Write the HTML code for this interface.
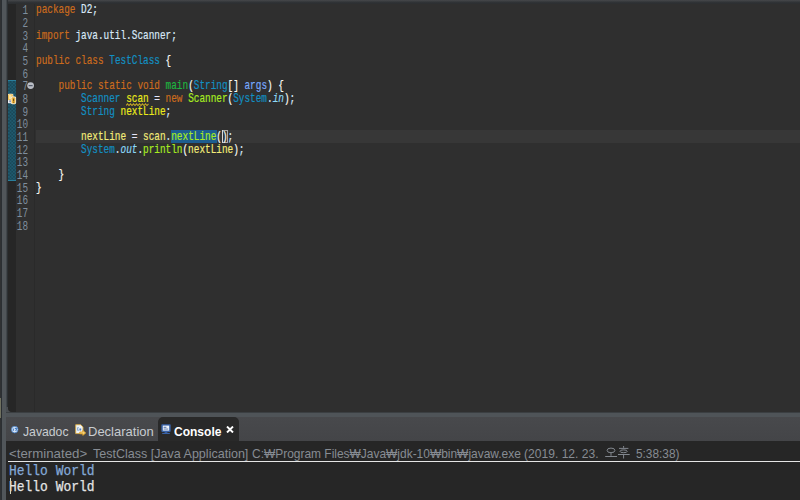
<!DOCTYPE html>
<html><head><meta charset="utf-8">
<style>
*{margin:0;padding:0;box-sizing:border-box}
html,body{width:800px;height:500px;overflow:hidden;background:#2f3133;position:relative}
.abs{position:absolute}
#lbar{left:2px;top:0;width:4px;height:500px;background:#51565a}
#lbar2{left:6px;top:0;width:2px;height:412px;background:linear-gradient(90deg,#41464a 50%,#2c3033 50%)}
#lbar0{left:1px;top:0;width:1px;height:500px;background:#2b2f33}
#olive{left:0;top:398px;width:1px;height:20px;background:#6f705f}
#corner{left:6px;top:407px;width:6px;height:6px;background:#4a4e52}
#editor{left:8px;top:0;width:792px;height:412px;background:#2f2f2f;overflow:hidden;border-bottom-left-radius:4px}
#topgrad{left:0;top:0;width:792px;height:4px;background:linear-gradient(#47484b,#3a3d40 30%,#303336 60%,#2c2e30)}
#ruler{left:0;top:4px;width:8px;height:408px;background:#262626;border-bottom-left-radius:4px}
#range{left:0;top:79.5px;width:8px;height:101.5px;background:repeating-conic-gradient(#1a4858 0 25%,#1f5b70 0 50%) 0 0/3.4px 3.4px;border-top:1px solid #2a7f9c;border-bottom:1px solid #2a7f9c}
#lnsep{left:26px;top:4px;width:1px;height:408px;background:#2a2a2a}
#lnums{left:0;top:5.3px;width:20px;text-align:right;font:12px/12.67px "Liberation Mono",monospace;color:#7f8e9d;white-space:pre;transform:scaleX(.78);transform-origin:right top}
#code{left:28px;top:4.4px;-webkit-text-stroke:0.2px;font:13px/12.67px "Liberation Mono",monospace;color:#d9e8f7;white-space:pre;transform:scaleX(.722);transform-origin:left top}
#curline{left:28px;top:130.3px;width:764px;height:12.7px;background:#373737}
#occ{left:163px;top:130.3px;width:45.5px;height:12.7px;background:#1d5d8f}
#brbox{left:214px;top:130.3px;width:6px;height:12.7px;border:1px solid #a9a9a9}
#caret{left:214px;top:130.3px;width:1px;height:12.7px;background:#d8d8d8}
#squig{left:117.5px;top:102.5px;width:23px;height:3px}
.k{color:#cc6c1d}.c{color:#1290c3}.md{color:#1eb540}.mi{color:#a7ec21}.lv{color:#f3ec79}.ld{color:#eaea1a}.pa{color:#79abff}.sf{color:#8ddaf8;font-style:italic}.op{color:#e6e6fa}.br{color:#f9faf4}
#strip{left:6px;top:412px;width:794px;height:5px;background:#4f5458;border-top:1px solid #3b3f42}
#tabbar{left:6px;top:417px;width:794px;height:24px;background:linear-gradient(#48494c,#444548)}
#console{left:6px;top:441px;width:794px;height:59px;background:#262626}
.tab{position:absolute;top:2.5px;height:24px;font:13px/24px "Liberation Sans",sans-serif;color:#c8ccd0;white-space:nowrap}
#ctab{left:152px;top:0;width:80.8px;height:24px;background:#292929;border-radius:5px 5px 0 0}
.term{position:absolute;top:5.5px;font:13px/14px "Liberation Sans",sans-serif;color:#878c93;white-space:nowrap;transform-origin:left top}
#uline{left:1.5px;top:19.5px;width:792px;height:1.6px;background:#e6e6e6}
.out{position:absolute;left:3px;-webkit-text-stroke:0.25px;font:14px/16px "Liberation Mono",monospace;white-space:pre;transform:scaleX(.925);transform-origin:left top}
</style></head><body>
<div id="lbar" class="abs"></div>
<div id="lbar2" class="abs"></div>
<div id="lbar0" class="abs"></div>
<div id="olive" class="abs"></div>
<div id="corner" class="abs"></div>
<div id="editor" class="abs">
  <div id="topgrad" class="abs"></div>
  <div id="ruler" class="abs"></div>
  <div id="range" class="abs"></div>
  <div id="lnsep" class="abs"></div>
  <div id="curline" class="abs"></div>
  <div id="occ" class="abs"></div>
  <div id="brbox" class="abs"></div>
  <div id="caret" class="abs"></div>
  <svg id="squig" class="abs" viewBox="0 0 23 3"><path d="M0 2.5 L1.5 0.8 L3 2.5 L4.5 0.8 L6 2.5 L7.5 0.8 L9 2.5 L10.5 0.8 L12 2.5 L13.5 0.8 L15 2.5 L16.5 0.8 L18 2.5 L19.5 0.8 L21 2.5 L22.5 0.8" fill="none" stroke="#c0a424" stroke-width="1.1"/></svg>
  <div id="lnums" class="abs">1
2
3
4
5
6
7
8
9
10
11
12
13
14
15
16
17
18</div>
  <svg class="abs" style="left:19px;top:82px" width="8" height="8" viewBox="0 0 8 8"><circle cx="3.6" cy="3.6" r="3.4" fill="#b9bdc5"/><rect x="1.6" y="3.1" width="4" height="1.1" fill="#4b5262"/></svg>
  <svg class="abs" style="left:-8px;top:90px" width="18" height="16" viewBox="0 90 18 16">
    <rect x="7.6" y="93.8" width="5.8" height="9.4" rx="1.3" fill="#e9eef3"/>
    <rect x="8" y="94.2" width="5" height="6" rx="1" fill="#f1c157"/>
    <rect x="9" y="95" width="2.4" height="4" fill="#f8e3a4"/>
    <rect x="9.3" y="100.4" width="2" height="1.8" fill="#7e8db0"/>
    <rect x="10.9" y="96.4" width="5.2" height="7.8" rx="1.4" fill="#f3f3f0"/>
    <rect x="11.6" y="97.2" width="3.8" height="6.3" rx="1" fill="#eeb43e"/>
    <rect x="13.2" y="98.6" width="0.9" height="2.6" fill="#4d3a12"/>
    <rect x="13.2" y="101.8" width="0.9" height="0.9" fill="#4d3a12"/>
  </svg>
<div id="code" class="abs"><span class="k">package</span> D2;

<span class="k">import</span> java.util.Scanner;

<span class="k">public</span> <span class="k">class</span> <span class="c">TestClass</span> <span class="br">{</span>

    <span class="k">public</span> <span class="k">static</span> <span class="k">void</span> <span class="md">main</span><span class="br">(</span><span class="c">String</span><span class="br">[]</span> <span class="pa">args</span><span class="br">)</span> <span class="br">{</span>
        <span class="c">Scanner</span> <span class="ld">scan</span> <span class="op">=</span> <span class="k">new</span> <span class="mi">Scanner</span><span class="br">(</span><span class="c">System</span>.<span class="sf">in</span><span class="br">)</span>;
        <span class="c">String</span> <span class="ld">nextLine</span>;

        <span class="lv">nextLine</span> <span class="op">=</span> <span class="lv">scan</span>.<span class="mi">nextLine</span><span class="br">()</span>;
        <span class="c">System</span>.<span class="sf">out</span>.<span class="mi">println</span><span class="br">(</span><span class="lv">nextLine</span><span class="br">)</span>;

    <span class="br">}</span>
<span class="br">}</span>
</div>
</div>
<div id="strip" class="abs"></div>
<div id="tabbar" class="abs">
  <svg class="abs" style="left:5px;top:9px" width="8" height="8" viewBox="0 0 8 8"><circle cx="3.7" cy="3.6" r="3.3" fill="#d6e4f4" stroke="#3f7cc6" stroke-width="0.8"/><path d="M2.3 2.6 v2.2 M3.8 2.4 h1.9 l-0.9 2.6" fill="none" stroke="#2f6fc0" stroke-width="1"/></svg>
  <div class="tab" style="left:17px;transform:scaleX(.94);transform-origin:left">Javadoc</div>
  <svg class="abs" style="left:69px;top:6.5px" width="12" height="12" viewBox="0 0 12 12">
    <path d="M0.7 0.7 h5 l2.3 2.3 v6.6 h-7.3z" fill="#eef3f8" stroke="#d6aa45" stroke-width="0.9"/>
    <path d="M3.2 3 q-1.2 1.8 0 4" fill="none" stroke="#5b8ac4" stroke-width="0.9"/>
    <path d="M4.4 4.6 h1.8 v1.6 q-0.9 0.8 -1.8 0z" fill="#4d7fc0"/>
    <path d="M4.8 8 h3 v-1.6 l3 2.5 l-3 2.5 v-1.6 h-3z" fill="#f2d27a" stroke="#dc9a22" stroke-width="0.8"/>
  </svg>
  <div class="tab" style="left:82px">Declaration</div>
  <div id="ctab" class="abs"></div>
  <svg class="abs" style="left:155px;top:7px" width="10" height="10" viewBox="0 0 10 10">
    <rect x="0.3" y="0.3" width="9.4" height="7.6" rx="0.8" fill="#3862a8"/>
    <rect x="1.8" y="1.6" width="6.4" height="5" fill="#eef3fb"/>
    <rect x="2.6" y="2.8" width="2.8" height="0.9" fill="#3e5e9c"/>
    <rect x="2.6" y="4.6" width="4.6" height="0.9" fill="#5a76aa"/>
    <rect x="3.6" y="8" width="2.8" height="0.9" fill="#3a64aa"/>
    <rect x="1.2" y="8.9" width="7.6" height="1.1" fill="#3862a8"/>
  </svg>
  <div class="tab" style="left:168px;color:#fff;font-weight:bold;transform:scaleX(.925);transform-origin:left">Console</div>
  <svg class="abs" style="left:219.6px;top:9px" width="8" height="7" viewBox="0 0 8 7"><path d="M1 0.5 L7 6.5 M7 0.5 L1 6.5" stroke="#fff" stroke-width="1.9"/></svg>
</div>
<div id="console" class="abs">
  <div class="term" style="left:3.1px;transform:scaleX(1.02)">&lt;terminated&gt;</div>
  <div class="term" style="left:86.85px;transform:scaleX(0.964)">TestClass [Java Application]</div>
  <div class="term" style="left:245.85px;transform:scaleX(0.919)">C:₩Program Files₩Java₩jdk-10₩bin₩javaw.exe</div>
  <div class="term" style="left:518.1px;transform:scaleX(0.93)">(2019. 12. 23.</div>
  <svg class="abs" style="left:599px;top:5px" width="26" height="14" viewBox="0 0 26 14"><g fill="none" stroke="#878c93" stroke-width="0.95"><ellipse cx="6" cy="4.4" rx="3.9" ry="2.3"/><path d="M6 6.8 v3 M0.2 10.5 h11.8"/><path d="M18.6 0 v1.8 M14 2.4 h9.4 M13 8.5 h11.7 M18.6 8.5 v4"/><ellipse cx="18.6" cy="5.3" rx="3.6" ry="1.4"/></g></svg>
  <div class="term" style="left:629.7px;transform:scaleX(0.91)">5:38:38)</div>
  <div id="uline" class="abs"></div>
  <div class="out" style="top:21.5px;color:#84a9d8">Hello World</div>
  <div class="out" style="top:38px;color:#e4e4e4">Hello World</div>
  <div class="abs" style="left:3.6px;top:37px;width:1px;height:15.5px;background:#d8d8c0"></div>
</div>
</body></html>
